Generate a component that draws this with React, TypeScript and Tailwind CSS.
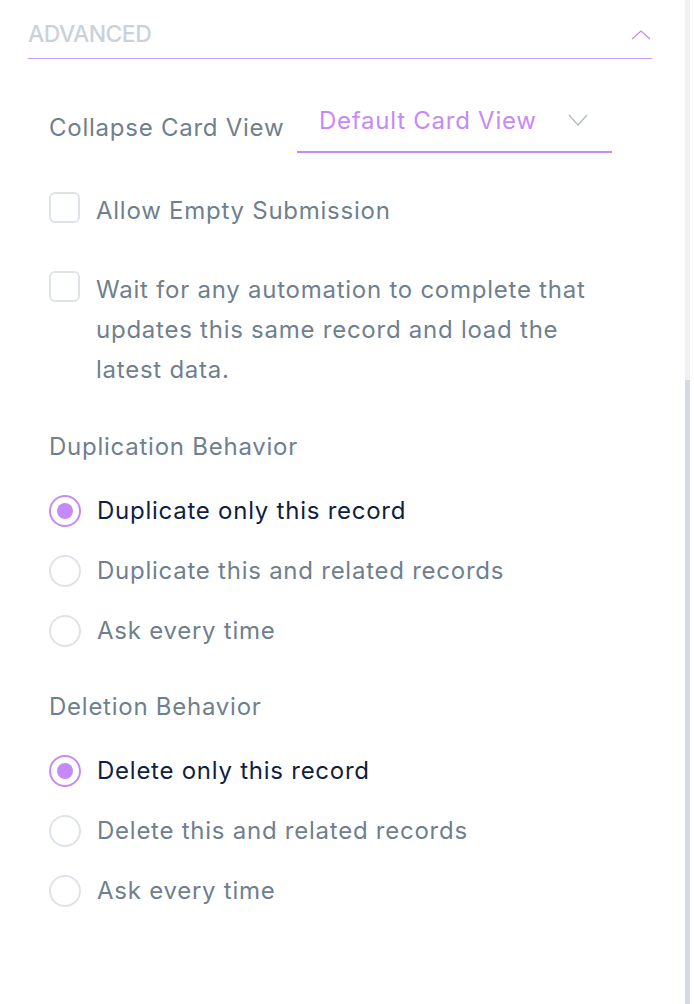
import { useState } from 'react';

const font = { fontFamily: 'Inter, "Noto Sans", sans-serif' };

const Checkbox = ({ label }: { label: React.ReactNode }) => (
  <label className="flex items-start gap-[16px]">
    <span className="mt-[1px] block h-[31px] w-[31px] shrink-0 rounded-[6px] border-2 border-[#dfe3e9] bg-white" />
    <span className="text-[24px] leading-[40px] tracking-[0.75px] text-[#6f7f8e]">{label}</span>
  </label>
);

const Radio = ({ label, checked, onClick }: { label: string; checked: boolean; onClick: () => void }) => (
  <button onClick={onClick} className="flex h-[60px] items-center gap-[16px] text-left">
    <span
      className={
        checked
          ? 'flex h-[32px] w-[32px] shrink-0 items-center justify-center rounded-full border-2 border-[#c58af9] bg-white'
          : 'flex h-[32px] w-[32px] shrink-0 items-center justify-center rounded-full border-2 border-[#dfe3e9] bg-white'
      }
    >
      {checked && <span className="block h-[16px] w-[16px] rounded-full bg-[#c58af9]" />}
    </span>
    <span
      className={
        checked
          ? 'text-[24px] tracking-[0.75px] text-[#0f1e42]'
          : 'text-[24px] tracking-[0.75px] text-[#6f7f8e]'
      }
    >
      {label}
    </span>
  </button>
);

const RadioGroup = ({ title, options }: { title: string; options: string[] }) => {
  const [value, setValue] = useState(0);
  return (
    <div className="flex flex-col">
      <div className="mb-[14px] text-[24px] leading-[40px] tracking-[0.75px] text-[#6f7f8e]">{title}</div>
      {options.map((o, i) => (
        <Radio key={o} label={o} checked={value === i} onClick={() => setValue(i)} />
      ))}
    </div>
  );
};

export default function App() {
  return (
    <div className="flex h-[1004px] w-[694px] bg-white" style={font}>
      <div className="flex-1 pl-[28px] pr-[33px] pt-[20px]">
        {/* section header */}
        <div className="flex h-[39px] items-start justify-between border-b border-[#c39cf5]">
          <span className="text-[23px] font-medium uppercase leading-[28px] tracking-tight text-[#cbd1da]">
            Advanced
          </span>
          <svg width="20" height="10" viewBox="0 0 20 10" className="mr-[1px] mt-[10px]">
            <path d="M1 9 L10 1 L19 9" fill="none" stroke="#c58af9" strokeWidth="1.3" />
          </svg>
        </div>

        <div className="flex flex-col pl-[21px]">
          {/* collapse card view */}
          <div className="mt-[42px] flex items-end">
            <span className="mb-[7px] w-[248px] text-[24px] tracking-[0.75px] text-[#6f7f8e]">Collapse Card View</span>
            <div className="flex h-[52px] w-[315px] items-start justify-between border-b-2 border-[#c58af9] pl-[22px] pr-[24px] pt-[2px]">
              <span className="text-[24px] tracking-[0.75px] text-[#c58af9]">Default Card View</span>
              <svg width="20" height="12" viewBox="0 0 20 12" className="mt-[11px]">
                <path d="M1 1 L10 11 L19 1" fill="none" stroke="#b5bec9" strokeWidth="1.5" />
              </svg>
            </div>
          </div>

          <div className="mt-[38px] flex flex-col gap-[39px]">
            <Checkbox label="Allow Empty Submission" />
            <Checkbox
              label={
                <>
                  Wait for any automation to complete that
                  <br />
                  updates this same record and load the
                  <br />
                  latest data.
                </>
              }
            />
          </div>

          <div className="mt-[37px]">
            <RadioGroup
              title="Duplication Behavior"
              options={['Duplicate only this record', 'Duplicate this and related records', 'Ask every time']}
            />
          </div>
          <div className="mt-[26px]">
            <RadioGroup
              title="Deletion Behavior"
              options={['Delete only this record', 'Delete this and related records', 'Ask every time']}
            />
          </div>
        </div>
      </div>

      {/* scrollbar */}
      <div className="mr-[4px] flex w-[5px] flex-col bg-[#f1f1f5]">
        <div className="h-[380px]" />
        <div className="flex-1 bg-[#d3dbe2]" />
      </div>
    </div>
  );
}
